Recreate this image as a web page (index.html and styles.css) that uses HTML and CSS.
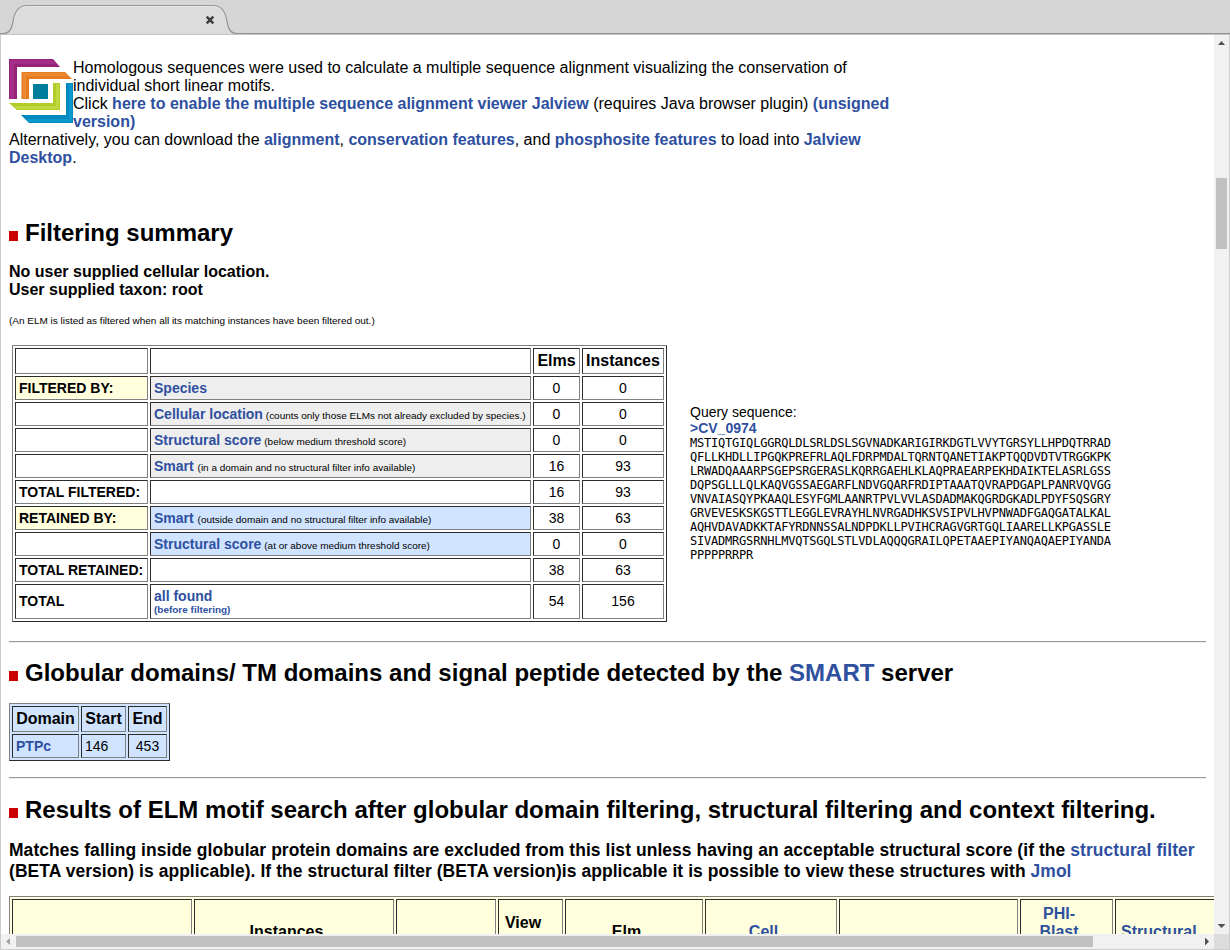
FILE: index.html
```html
<!DOCTYPE html>
<html lang="en">
<head>
<meta charset="utf-8">
<title>ELM results</title>
<link rel="stylesheet" href="styles.css">
</head>
<body>
<div class="window">
  <header class="tabbar">
    <svg class="tab" width="250" height="35" viewBox="0 0 250 35">
      <path d="M0 35V33.500H3C9 33.500 11 30 12.500 24C14 14 17 5.500 27 5.500H213C223 5.500 226 14 227.500 24C229 30 231 33.500 237 33.500H250V35Z" fill="#dcdcdc"/>
      <path d="M15 19C17 11 19 6.500 27 6.500H213C221 6.500 223.500 11 226 19" fill="none" stroke="#e9e9e9"/>
      <path d="M0 33.500H3C9 33.500 11 30 12.500 24C14 14 17 5.500 27 5.500H213C223 5.500 226 14 227.500 24C229 30 231 33.500 237 33.500H250" fill="none" stroke="#90979c" stroke-width="1.200"/>
      <path d="M206.700 16.700L213.300 23.300M213.300 16.700L206.700 23.300" stroke="#3e3e3e" stroke-width="2.500"/>
      <path d="M0 34.500H250" stroke="#c4c4c4"/>
    </svg>
  </header>
  <div class="frame">
    <main class="page">
      <section class="intro">
        <svg class="logo" width="64" height="64" viewBox="0 0 64 64">
          <path d="M0 0H44L51 8H8V40H0Z" fill="#96237a"/>
          <path d="M1 1H43L47 5H5V39H1Z" fill="#a32d87"/>
          <path d="M12.500 13H56L63 20H20V40H12.500Z" fill="#e57c22"/>
          <path d="M14 14H55L58 17H17V39H14Z" fill="#ec8a31"/>
          <path d="M24 25H39V40H24Z" fill="#007d9a"/>
          <path d="M44 24H51V51H8L0 44H44Z" fill="#b4cc29"/>
          <path d="M47 25H50V50H8L5 47H47Z" fill="#c2d842"/>
          <path d="M57 24H64V64H20L12 56H57Z" fill="#0089c0"/>
          <path d="M60 25H63V63H20L17 60H60Z" fill="#0a99cf"/>
        </svg>
        <p>Homologous sequences were used to calculate a multiple sequence alignment visualizing the conservation of<br>individual short linear motifs.<br>Click <a>here to enable the multiple sequence alignment viewer Jalview</a> (requires Java browser plugin) <a>(unsigned<br>version)</a></p>
      </section>
      <p>Alternatively, you can download the <a>alignment</a>, <a>conservation features</a>, and <a>phosphosite features</a> to load into <a>Jalview<br>Desktop</a>.</p>

      <h2 class="first">Filtering summary</h2>
      <p class="strong">No user supplied cellular location.<br>User supplied taxon: root</p>
      <p class="note">(An ELM is listed as filtered when all its matching instances have been filtered out.)</p>

      <div class="summary">
        <table class="grid filters">
          <colgroup><col class="c-label"><col class="c-filter"><col class="c-elms"><col class="c-inst"></colgroup>
          <tr><th></th><th></th><th>Elms</th><th>Instances</th></tr>
          <tr><td class="label cream">FILTERED BY:</td><td class="gray"><a>Species</a></td><td class="num">0</td><td class="num">0</td></tr>
          <tr><td></td><td class="gray"><a>Cellular location</a> <small class="tight">(counts only those ELMs not already excluded by species.)</small></td><td class="num">0</td><td class="num">0</td></tr>
          <tr><td></td><td class="gray"><a>Structural score</a> <small class="tight">(below medium threshold score)</small></td><td class="num">0</td><td class="num">0</td></tr>
          <tr><td></td><td class="gray"><a>Smart</a> <small>(in a domain and no structural filter info available)</small></td><td class="num">16</td><td class="num">93</td></tr>
          <tr><td class="label">TOTAL FILTERED:</td><td></td><td class="num">16</td><td class="num">93</td></tr>
          <tr><td class="label cream">RETAINED BY:</td><td class="blue"><a>Smart</a> <small>(outside domain and no structural filter info available)</small></td><td class="num">38</td><td class="num">63</td></tr>
          <tr><td></td><td class="blue"><a>Structural score</a> <small class="tight">(at or above medium threshold score)</small></td><td class="num">0</td><td class="num">0</td></tr>
          <tr><td class="label">TOTAL RETAINED:</td><td></td><td class="num">38</td><td class="num">63</td></tr>
          <tr class="total"><td class="label">TOTAL</td><td><a>all found</a><a class="sub">(before filtering)</a></td><td class="num">54</td><td class="num">156</td></tr>
        </table>
        <div class="query">
          <p>Query sequence:</p>
          <p><a>&gt;CV_0974</a></p>
          <pre>MSTIQTGIQLGGRQLDLSRLDSLSGVNADKARIGIRKDGTLVVYTGRSYLLHPDQTRRAD
QFLLKHDLLIPGQKPREFRLAQLFDRPMDALTQRNTQANETIAKPTQQDVDTVTRGGKPK
LRWADQAAARPSGEPSRGERASLKQRRGAEHLKLAQPRAEARPEKHDAIKTELASRLGSS
DQPSGLLLQLKAQVGSSAEGARFLNDVGQARFRDIPTAAATQVRAPDGAPLPANRVQVGG
VNVAIASQYPKAAQLESYFGMLAANRTPVLVVLASDADMAKQGRDGKADLPDYFSQSGRY
GRVEVESKSKGSTTLEGGLEVRAYHLNVRGADHKSVSIPVLHVPNWADFGAQGATALKAL
AQHVDAVADKKTAFYRDNNSSALNDPDKLLPVIHCRAGVGRTGQLIAARELLKPGASSLE
SIVADMRGSRNHLMVQTSGQLSTLVDLAQQQGRAILQPETAAEPIYANQAQAEPIYANDA
PPPPPRRPR</pre>
        </div>
      </div>

      <hr>
      <h2>Globular domains/ TM domains and signal peptide detected by the <a>SMART</a> server</h2>
      <table class="grid domains">
        <colgroup><col class="d-name"><col class="d-start"><col class="d-end"></colgroup>
        <tr><th>Domain</th><th>Start</th><th>End</th></tr>
        <tr><td><a>PTPc</a></td><td>146</td><td class="num">453</td></tr>
      </table>

      <hr class="second">
      <h2 class="last">Results of ELM motif search after globular domain filtering, structural filtering and context filtering.</h2>
      <p class="matches">Matches falling inside globular protein domains are excluded from this list unless having an acceptable structural score (if the <a>structural filter</a><br>(BETA version) is applicable). If the structural filter (BETA version)is applicable it is possible to view these structures with <a>Jmol</a></p>

      <table class="grid results">
        <colgroup><col class="r1"><col class="r2"><col class="r3"><col class="r4"><col class="r5"><col class="r6"><col class="r7"><col class="r8"><col class="r9"></colgroup>
        <tr><th></th><th class="mid">Instances</th><th></th><th class="view">View</th><th class="mid">Elm</th><th class="mid"><a>Cell</a></th><th></th><th><a>PHI-<br>Blast</a></th><th class="mid left"><a>Structural</a></th></tr>
      </table>
    </main>
    <div class="vbar"><i class="arrow up"></i><i class="thumb"></i><i class="arrow down"></i></div>
    <div class="hbar"><i class="arrow back"></i><i class="thumb"></i><i class="arrow fwd"></i></div>
    <div class="corner"></div>
  </div>
</div>
</body>
</html>
```
FILE: styles.css
```css
* { box-sizing: border-box; }
body { margin: 0; font: 16px/18px "Liberation Sans", Arial, sans-serif; color: #000; }
p, pre, h2 { margin: 0; white-space: nowrap; }
a { color: #2e509f; font-weight: bold; }

.window { width: 1230px; height: 950px; display: grid; grid-template-rows: 35px 915px; overflow: hidden; }
.tabbar { background: linear-gradient(#d6d6d6 33px, #909090 33px 34px, #c4c4c4 34px); }
.tab { display: block; }

.frame { display: grid; grid-template: 899px 15px / 1213px 15px; border: solid #ccc; border-width: 0 1px 1px; }
.page { overflow: hidden; background: #fff; padding: 24px 8px 0; }

.intro { display: flex; height: 72px; }
.logo { flex: none; }

h2 { display: flex; align-items: baseline; font-size: 24px; line-height: 28px; margin-top: 16px; white-space: pre; }
h2::before { content: ""; width: 9px; height: 10px; margin-right: 7px; background: #c00; }
h2.first { margin-top: 52px; }
h2.last { margin-top: 17px; }
.strong { font-weight: bold; margin-top: 16px; }
.note { font-size: 9.98px; line-height: 12px; margin-top: 16px; }

.grid { table-layout: fixed; border-collapse: separate; border-spacing: 2px; border: 1px solid; border-color: #808080 #2c2c2c #2c2c2c #808080; }
.grid th, .grid td { padding: 3px; border: 1px solid; border-color: #2c2c2c #808080 #808080 #2c2c2c; white-space: nowrap; }
.grid th { height: 26px; line-height: 18px; }
.grid td { height: 24px; font-size: 14px; line-height: 16px; }
.grid .num { text-align: center; }
.label { font-weight: bold; }
.cream { background: #ffffdd; }
.gray { background: #eee; }
.blue { background: #d0e4ff; }
small { font-size: 9.98px; line-height: 10px; }
.tight { margin-left: -1px; }
.sub { display: block; font-size: 9.98px; line-height: 11px; }
.grid .total td { height: 35px; }
.grid .total .label, .grid .total .num { padding-bottom: 5px; }

.summary { display: flex; align-items: center; margin: 18px 0 19px 3px; }
.filters { width: 655px; flex: none; }
.c-label { width: 133px; }
.c-filter { width: 381px; }
.c-elms { width: 47px; }
.c-inst { width: 82px; }
.query { margin-left: 23px; padding-bottom: 2px; font-size: 14px; line-height: 16px; }
.query pre { font: 12px/14px "DejaVu Sans Mono", monospace; letter-spacing: -0.21px; white-space: pre; }

hr { height: 2px; margin: 0; border: solid; border-width: 1px 0; border-color: #9a9a9a #eee #eee; }
.domains { width: 161px; margin-top: 16px; background: #d0e4ff; }
.d-name { width: 67px; }
.d-start { width: 45px; }
.d-end { width: 39px; }
.second { margin-top: 16px; }

.matches { font-size: 17.45px; line-height: 21px; letter-spacing: 0.077px; font-weight: bold; margin-top: 16px; }
.results { width: 1290px; margin-top: 14px; background: #ffffdd; }
.grid.results th { height: 62px; padding: 5px 17px 0 2px; vertical-align: top; }
.grid.results .mid { padding-top: 23px; }
.grid.results .view { padding-top: 14px; }
.grid.results .left { padding-left: 5px; text-align: left; }
.r1 { width: 180px; }
.r2 { width: 200px; }
.r3 { width: 100px; }
.r4 { width: 65px; }
.r5 { width: 138px; }
.r6 { width: 132px; }
.r7 { width: 179px; }
.r8 { width: 93px; }

.vbar, .hbar { display: flex; align-items: center; background: #f1f1f1; }
.vbar { flex-direction: column; }
.thumb { background: #c1c1c1; }
.vbar .thumb { width: 11px; height: 71px; margin-top: 133px; }
.hbar .thumb { width: 1077px; height: 11px; margin-left: 6px; }
.corner { background: #dcdcdc; }
.arrow { background: #505050; }
.up { width: 7px; height: 4px; margin-top: 6px; clip-path: polygon(50% 0, 100% 100%, 0 100%); }
.down { width: 8px; height: 4px; margin-top: auto; margin-bottom: 6px; clip-path: polygon(0 0, 100% 0, 50% 100%); }
.back { width: 4px; height: 7px; margin-left: 5px; background: #a3a3a3; clip-path: polygon(0 50%, 100% 0, 100% 100%); }
.fwd { width: 4px; height: 8px; margin-left: auto; margin-right: 5px; clip-path: polygon(0 0, 100% 50%, 0 100%); }
```
